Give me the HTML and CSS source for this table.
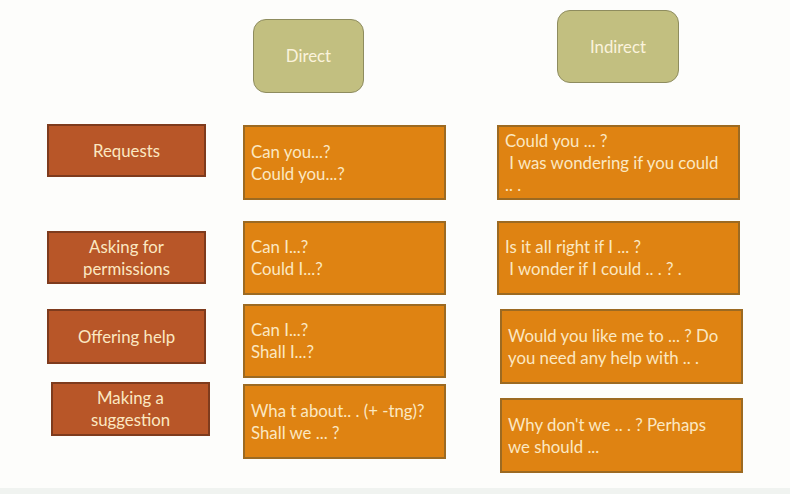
FILE: index.html
```html
<!DOCTYPE html>
<html lang="en">
<head>
<meta charset="utf-8">
<title>Direct and indirect questions</title>
<link rel="stylesheet" href="styles.css">
</head>
<body>
<main class="slide">
  <div class="cell head-direct"><div class="box olive direct">Direct</div></div>
  <div class="cell head-indirect"><div class="box olive indirect">Indirect</div></div>

  <div class="cell"><div class="box red fn r1">Requests</div></div>
  <div class="cell"><div class="box orange dir d1"><p>Can you...?</p><p>Could you...?</p></div></div>
  <div class="cell"><div class="box orange ind i1"><p>Could you ... ?</p><p>&nbsp;I was wondering if you could</p><p>.. .</p></div></div>

  <div class="cell"><div class="box red fn r2">Asking for<br>permissions</div></div>
  <div class="cell"><div class="box orange dir d2"><p>Can I...?</p><p>Could I...?</p></div></div>
  <div class="cell"><div class="box orange ind i2"><p>Is it all right if I ... ?</p><p>&nbsp;I wonder if I could .. . ? .</p></div></div>

  <div class="cell"><div class="box red fn r3">Offering help</div></div>
  <div class="cell"><div class="box orange dir d3"><p>Can I...?</p><p>Shall I...?</p></div></div>
  <div class="cell"><div class="box orange ind i3"><p>Would you like me to ... ? Do</p><p>you need any help with .. .</p></div></div>

  <div class="cell"><div class="box red fn r4">Making a<br>suggestion</div></div>
  <div class="cell"><div class="box orange dir d4"><p>Wha t about.. . (+ -tng)?</p><p>Shall we ... ?</p></div></div>
  <div class="cell"><div class="box orange ind i4"><p>Why don't we .. . ? Perhaps</p><p>we should ...</p></div></div>
</main>
<div class="footer-band"></div>
</body>
</html>
```

FILE: styles.css
```css
html, body {
  margin: 0;
  padding: 0;
  background: #fdfdfb;
}

body {
  width: 790px;
  height: 494px;
  overflow: hidden;
  position: relative;
  font-family: Lato, "Open Sans", sans-serif;
  color: #fbe8c2;
}

.slide {
  display: grid;
  grid-template-columns: 196px 254px 250px;
  grid-template-rows: 114px 97px 83px 78px 100px;
  padding: 10px 0 0 47px;
}

.cell {
  display: flex;
  align-items: flex-start;
}

.head-direct { grid-column: 2; }
.head-indirect { grid-column: 3; }

.box {
  box-sizing: border-box;
  display: flex;
  flex-direction: column;
  justify-content: center;
  font-size: 16.8px;
  line-height: 22px;
}

.box p { margin: 0; white-space: pre; }

.olive {
  background: #c2bf80;
  border: 1.5px solid #8e8c5e;
  border-radius: 13px;
  align-items: center;
  color: #fbf3dc;
}

.red {
  background: #b85628;
  border: 2px solid #7e3b1d;
  align-items: center;
  text-align: center;
}

.orange {
  background: #df8312;
  border: 2px solid #9c6a22;
  align-items: flex-start;
  padding-left: 6px;
}

.direct { width: 111px; height: 74px; margin: 9px 0 0 10px; }
.indirect { width: 122px; height: 73px; margin-left: 60px; }

.fn { width: 159px; height: 54px; }
.dir { width: 203px; height: 75px; }
.ind { width: 243px; height: 75px; }

.r1 { height: 53px; }
.d1 { margin-top: 1px; }
.i1 { margin-top: 1px; }

.r2 { margin-top: 10px; height: 53px; }
.d2 { height: 74px; }
.i2 { height: 74px; }

.r3 { margin-top: 5px; height: 55px; }
.d3 { height: 74px; }
.i3 { margin: 5px 0 0 3px; }

.r4 { margin-left: 4px; }
.d4 { margin-top: 2px; }
.i4 { margin: 16px 0 0 3px; }

.footer-band {
  position: absolute;
  left: 0;
  right: 0;
  bottom: 0;
  height: 6px;
  background: #f0f3f0;
}
```
